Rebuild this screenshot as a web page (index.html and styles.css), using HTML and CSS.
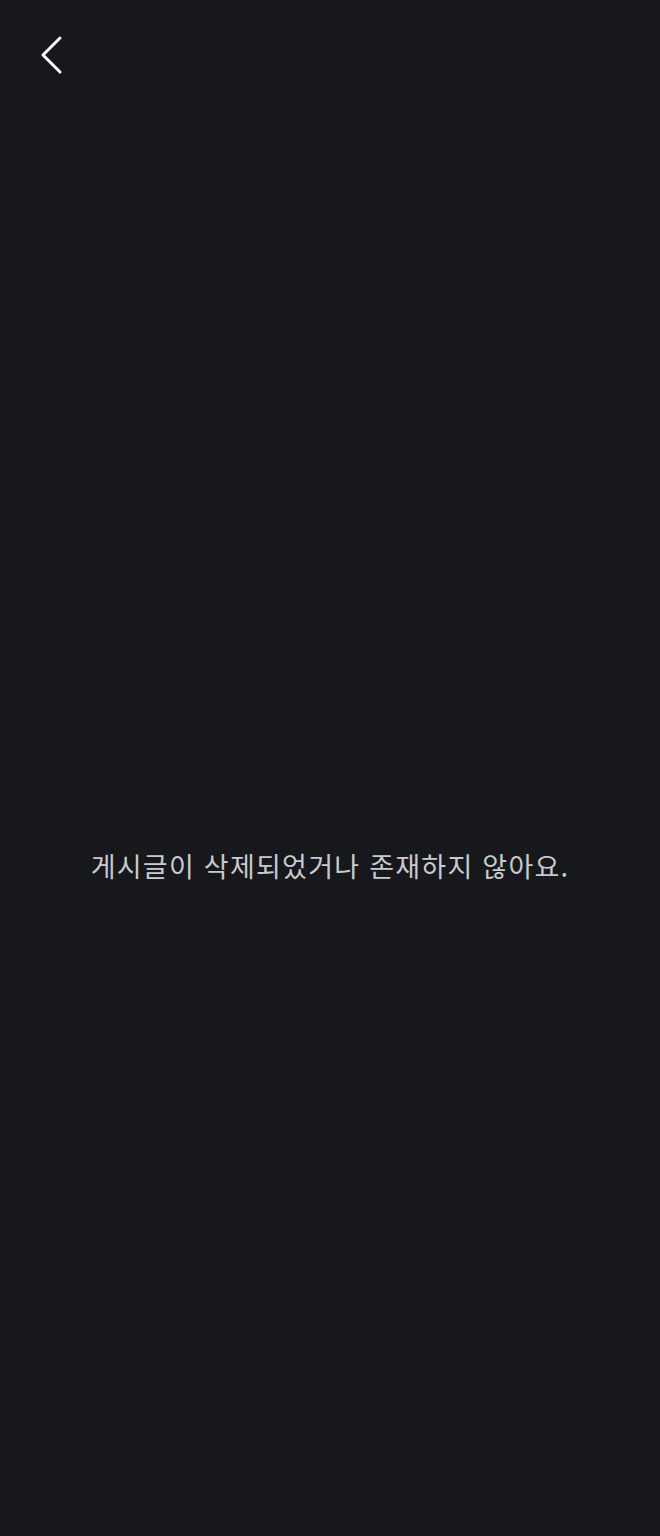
FILE: index.html
```html
<!DOCTYPE html>
<html lang="ko">
<head>
  <meta charset="utf-8">
  <title>게시글</title>
  <link rel="stylesheet" href="styles.css">
</head>
<body>
  <div class="screen">
    <header class="top-bar">
      <button class="back-btn" aria-label="뒤로">
        <svg width="30" height="44" viewBox="0 0 30 44">
          <path d="M24 5 L7 22 L24 39" fill="none" stroke="#ffffff" stroke-width="3" stroke-linecap="round" stroke-linejoin="round"/>
        </svg>
      </button>
    </header>
    <main class="empty">
      <p class="empty-msg">게시글이 삭제되었거나 존재하지 않아요.</p>
    </main>
  </div>
</body>
</html>
```

FILE: styles.css
```css
* {
  margin: 0;
  padding: 0;
  box-sizing: border-box;
  font-family: 'Noto Sans CJK KR', 'Noto Sans', sans-serif;
}

body, html {
  height: 100%;
  overflow: hidden;
  background: #17181c;
}

.screen {
  height: 100vh;
  display: flex;
  flex-direction: column;
}

.top-bar {
  height: 110px;
  padding: 33px 0 0 36px;
}

.back-btn {
  background: none;
  border: none;
  cursor: pointer;
  display: block;
}

.empty {
  flex: 1;
  display: flex;
  justify-content: center;
  padding-top: 738px;
}

.empty-msg {
  color: #c9cacd;
  font-size: 27px;
  letter-spacing: 1.25px;
  line-height: 1.3;
}
```
